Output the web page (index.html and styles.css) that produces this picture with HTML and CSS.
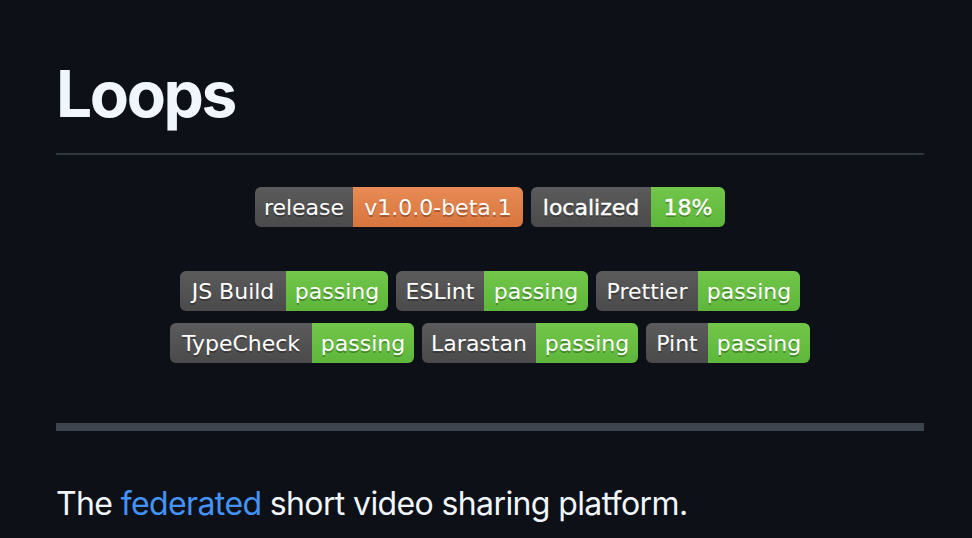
FILE: index.html
```html
<!DOCTYPE html>
<html>
<head>
<meta charset="utf-8">
<link rel="stylesheet" href="styles.css">
</head>
<body>
<main class="readme">
  <h1 class="title">Loops</h1>
  <div class="badges">
    <div class="row row-first">
      <span class="badge"><span class="seg label w98">release</span><span class="seg orange w170">v1.0.0-beta.1</span></span>
      <span class="badge bold"><span class="seg label w120">localized</span><span class="seg green w74">18%</span></span>
    </div>
    <div class="row row-second">
      <span class="badge"><span class="seg label w106">JS Build</span><span class="seg green w102">passing</span></span>
      <span class="badge"><span class="seg label w88">ESLint</span><span class="seg green w104">passing</span></span>
      <span class="badge"><span class="seg label w102">Prettier</span><span class="seg green w102">passing</span></span>
    </div>
    <div class="row row-third">
      <span class="badge"><span class="seg label w142">TypeCheck</span><span class="seg green w102">passing</span></span>
      <span class="badge"><span class="seg label w114">Larastan</span><span class="seg green w102">passing</span></span>
      <span class="badge"><span class="seg label w62">Pint</span><span class="seg green w102">passing</span></span>
    </div>
  </div>
  <hr class="rule">
  <p class="intro">The <a href="#">federated</a> short video sharing platform.</p>
</main>
</body>
</html>
```

FILE: styles.css
```css
html, body {
  margin: 0;
  padding: 0;
  background: #0d1117;
}

body {
  color: #f0f6fc;
  font-family: Inter, "Liberation Sans", sans-serif;
}

.readme {
  padding: 54px 48px 0 56px;
}

.title {
  margin: 0;
  font-size: 64px;
  line-height: 80px;
  font-weight: 700;
  padding-bottom: 19px;
  border-bottom: 2px solid #30363d;
  letter-spacing: -2.4px;
}

.badges {
  display: flex;
  flex-direction: column;
  align-items: center;
  margin-top: 32px;
}

.row {
  display: flex;
  gap: 8px;
  justify-content: center;
}

.row-second {
  margin-top: 44px;
}

.row-third {
  margin-top: 12px;
}

.badge {
  display: flex;
  height: 40px;
  border-radius: 6px;
  overflow: hidden;
  font-family: "DejaVu Sans", Verdana, sans-serif;
  font-size: 22px;
  color: #fff;
  text-shadow: 0 2px 0 rgba(1, 1, 1, 0.3);
}

.badge.bold .seg {
  -webkit-text-stroke: 0.4px #fff;
}

.seg {
  display: flex;
  align-items: center;
  justify-content: center;
  height: 40px;
  padding-top: 1px;
  box-sizing: border-box;
  white-space: nowrap;
}

.label {
  background: linear-gradient(#5b5b5b, #4a4a4a);
}

.orange {
  background: linear-gradient(#e88b54, #d8753f);
}

.green {
  background: linear-gradient(#72c64a, #5db73a);
}

.w62 { width: 62px; }
.w74 { width: 74px; }
.w88 { width: 88px; }
.w98 { width: 98px; }
.w102 { width: 102px; }
.w104 { width: 104px; }
.w106 { width: 106px; }
.w114 { width: 114px; }
.w120 { width: 120px; }
.w142 { width: 142px; }
.w170 { width: 170px; }

.rule {
  margin: 60px 0 0;
  height: 8px;
  border: 0;
  background: #3d444d;
}

.intro {
  margin: 49px 0 0;
  font-size: 32px;
  line-height: 48px;
  letter-spacing: -0.62px;
}

.intro a {
  color: #4493f8;
  text-decoration: none;
}
```
